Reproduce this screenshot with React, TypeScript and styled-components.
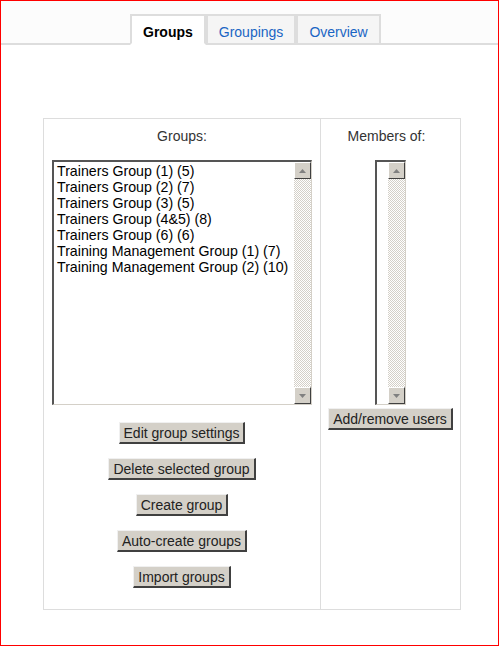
import styled, { createGlobalStyle } from 'styled-components';

const GlobalStyle = createGlobalStyle`
  html, body {
    margin: 0;
    padding: 0;
    background: #ffffff;
  }
  body {
    font-family: "Liberation Sans", Arial, sans-serif;
  }
`;

const Frame = styled.div`
  width: 499px;
  height: 646px;
  box-sizing: border-box;
  border: 1px solid #ff0000;
  background: #ffffff;
  overflow: hidden;
`;

const TabBar = styled.div`
  display: flex;
  padding: 13px 0 0 129px;
  border-bottom: 2px solid #dddddd;
  background: #fcfcfc;
`;

const Tab = styled.div<{ $active?: boolean }>`
  height: 24px;
  padding: 3px 11px 0;
  line-height: 26px;
  margin-bottom: -2px;
  border: 2px solid #dddddd;
  border-bottom-color: ${(p) => (p.$active ? '#ffffff' : '#dddddd')};
  background: ${(p) => (p.$active ? '#ffffff' : '#f5f5f5')};
  color: ${(p) => (p.$active ? '#000000' : '#1a65c4')};
  font-weight: ${(p) => (p.$active ? 700 : 400)};
  font-size: 14px;
`;

const Panel = styled.div`
  display: grid;
  grid-template-columns: 277px 1fr;
  width: 418px;
  box-sizing: border-box;
  margin: 73px 0 0 42px;
  border: 1px solid #dddddd;
`;

const Column = styled.div<{ $divider?: boolean }>`
  display: flex;
  flex-direction: column;
  align-items: center;
  padding: 9px 0 21px;
  border-right: ${(p) => (p.$divider ? '1px solid #dddddd' : 'none')};
`;

const Label = styled.div<{ $shift?: number }>`
  font-size: 14px;
  line-height: 16px;
  color: #333333;
  margin-bottom: 16px;
  padding-right: ${(p) => p.$shift ?? 0}px;
`;

const ListBox = styled.div<{ $width: number }>`
  display: flex;
  width: ${(p) => p.$width}px;
  height: 245px;
  box-sizing: border-box;
  border-style: solid;
  border-width: 2px 1px 1px 2px;
  border-color: #555555 #d4d0c8 #d4d0c8 #555555;
  background: #ffffff;
`;

const Options = styled.div`
  flex: 1;
  padding: 1px 0 0 3px;
  overflow: hidden;
`;

const Option = styled.div`
  font-size: 14.2px;
  line-height: 16px;
  color: #000000;
  white-space: nowrap;
`;

const ScrollBar = styled.div`
  display: flex;
  flex-direction: column;
  width: 17px;
  flex-shrink: 0;
`;

const ScrollButton = styled.div`
  height: 17px;
  box-sizing: border-box;
  display: flex;
  align-items: center;
  justify-content: center;
  background: #d4d0c8;
  border-style: solid;
  border-width: 1px;
  border-color: #ffffff #404040 #404040 #ffffff;
`;

const Track = styled.div`
  flex: 1;
  background: repeating-conic-gradient(#d4d0c8 0 25%, #ffffff 0 50%) 0 0 / 2px 2px;
`;

const Button = styled.button<{ $top?: number }>`
  height: 22px;
  margin-top: ${(p) => p.$top ?? 14}px;
  padding: 0 4px;
  font-family: "Liberation Sans", Arial, sans-serif;
  font-size: 14px;
  color: #222222;
  background: #d4d0c8;
  border-style: solid;
  border-width: 1px 2px 2px 1px;
  border-color: #f0f0f0 #404040 #404040 #f0f0f0;
  white-space: nowrap;
`;

const Arrow = ({ up }: { up?: boolean }) => (
  <svg width="7" height="4" viewBox="0 0 7 4">
    <path d={up ? 'M0 4 L3.5 0 L7 4 Z' : 'M0 0 L3.5 4 L7 0 Z'} fill="#808080" />
  </svg>
);

const Scroller = () => (
  <ScrollBar>
    <ScrollButton>
      <Arrow up />
    </ScrollButton>
    <Track />
    <ScrollButton>
      <Arrow />
    </ScrollButton>
  </ScrollBar>
);

const groups = [
  'Trainers Group (1) (5)',
  'Trainers Group (2) (7)',
  'Trainers Group (3) (5)',
  'Trainers Group (4&5) (8)',
  'Trainers Group (6) (6)',
  'Training Management Group (1) (7)',
  'Training Management Group (2) (10)',
];

export default function App() {
  return (
    <>
      <GlobalStyle />
      <Frame>
        <TabBar>
          <Tab $active>Groups</Tab>
          <Tab>Groupings</Tab>
          <Tab>Overview</Tab>
        </TabBar>
        <Panel>
          <Column $divider>
            <Label>Groups:</Label>
            <ListBox $width={260}>
              <Options>
                {groups.map((g) => (
                  <Option key={g}>{g}</Option>
                ))}
              </Options>
              <Scroller />
            </ListBox>
            <Button $top={17}>Edit group settings</Button>
            <Button>Delete selected group</Button>
            <Button>Create group</Button>
            <Button>Auto-create groups</Button>
            <Button>Import groups</Button>
          </Column>
          <Column>
            <Label $shift={8}>Members of:</Label>
            <ListBox $width={31}>
              <Options />
              <Scroller />
            </ListBox>
            <Button $top={3}>Add/remove users</Button>
          </Column>
        </Panel>
      </Frame>
    </>
  );
}
